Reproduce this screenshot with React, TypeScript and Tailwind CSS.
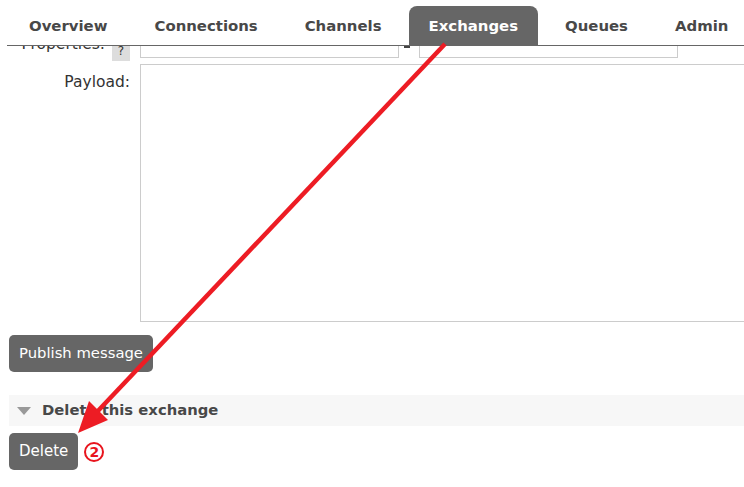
export default function App() {
    const tabs = ["Overview", "Connections", "Channels", "Exchanges", "Queues", "Admin"];

    return (
        <div className="relative w-[744px] h-[487px] overflow-hidden bg-white text-[#333] font-['DejaVu_Sans',sans-serif]">
            {/* Top navigation */}
            <div className="relative z-10 bg-white h-[46px] pl-[9px] flex items-end">
                <div className="absolute left-[7px] right-0 bottom-0 h-px bg-[#666]" />
                <div className="flex gap-[7px]">
                    {tabs.map((t) => (
                        <div
                            key={t}
                            className={
                                t === "Exchanges"
                                    ? "h-[40px] px-[20px] flex items-center rounded-t-[8px] bg-[#666] text-white font-bold text-[14.9px] whitespace-nowrap"
                                    : "h-[40px] px-[20px] flex items-center text-[#484848] font-bold text-[14.9px] whitespace-nowrap"
                            }
                        >
                            {t}
                        </div>
                    ))}
                </div>
            </div>

            {/* Form content, scrolled under the nav */}
            <div className="relative z-0 -mt-[14px] pl-[9px]">
                <div className="flex items-center h-[26px]">
                    <div className="w-[121px] shrink-0 flex justify-end items-center gap-[7px]">
                        <span className="text-[15.5px]">Properties:</span>
                        <span className="w-[18px] h-[20px] mt-[12px] bg-[#ddd] text-[12px] flex items-center justify-center">?</span>
                    </div>
                    <div className="ml-[10px] w-[259px] shrink-0 h-[26px] border border-[#ccc]" />
                    <div className="ml-[5px] w-[6px] h-[16px] bg-[#444] self-start" />
                    <div className="ml-[9px] w-[259px] shrink-0 h-[26px] border border-[#ccc]" />
                </div>

                <div className="flex gap-[10px] mt-[6px]">
                    <div className="w-[121px] shrink-0 text-right text-[15.5px] pt-[7px]">Payload:</div>
                    <div className="w-[620px] h-[258px] border border-[#ccc] shrink-0" />
                </div>

                <button className="mt-[13px] h-[37px] px-[10px] rounded-[5px] bg-[#666] text-white text-[14.8px]">
                    Publish message
                </button>

                <div className="mt-[23px] h-[31px] bg-[#f7f7f7] flex items-center pl-[8px] gap-[11px]">
                    <svg width="14" height="8" viewBox="0 0 14 8">
                        <polygon points="0,0 14,0 7,8" fill="#999" />
                    </svg>
                    <span className="font-bold text-[14.8px] text-[#484848]">Delete this exchange</span>
                </div>

                <div className="mt-[7px] flex items-center gap-[6px]">
                    <button className="h-[37px] px-[10px] rounded-[5px] bg-[#666] text-white text-[15px]">
                        Delete
                    </button>
                    <span className="w-[20px] h-[20px] rounded-full border-2 border-[#e8141d] text-[#e8141d] font-bold text-[14px] leading-none flex items-center justify-center">
                        2
                    </span>
                </div>
            </div>

            {/* Annotation arrow */}
            <svg className="absolute inset-0 z-20 pointer-events-none" width="744" height="487" viewBox="0 0 744 487">
                <line x1="445" y1="44" x2="96" y2="413" stroke="#ed1c24" strokeWidth="4.5" />
                <polygon points="78,433 89,401 108,420" fill="#ed1c24" />
            </svg>
        </div>
    );
}
